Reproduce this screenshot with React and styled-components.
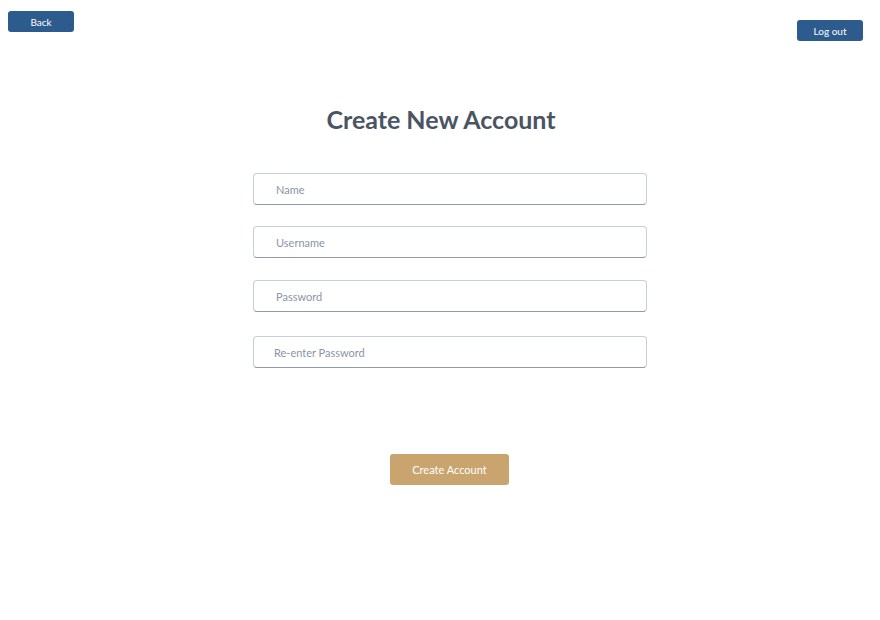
import React from "react";
import styled, { createGlobalStyle } from "styled-components";

const Global = createGlobalStyle`
  html, body { margin: 0; padding: 0; background: #ffffff; }
  body { font-family: Lato, "Liberation Sans", sans-serif; }
  * { box-sizing: border-box; }
`;

const Page = styled.div`
  width: 880px;
  height: 620px;
  position: relative;
  display: flex;
  flex-direction: column;
`;

const TopBar = styled.div`
  display: flex;
  justify-content: space-between;
  align-items: flex-start;
  padding: 11px 17px 0 8px;
  height: 41px;
`;

const NavButton = styled.button`
  width: 66px;
  height: 21px;
  margin-top: ${(p) => p.$offset || 0}px;
  background: #2d5b8d;
  color: #ffffff;
  border: none;
  border-radius: 3px;
  font-family: Lato, "Liberation Sans", sans-serif;
  font-size: 10px;
  padding: 0;
  cursor: pointer;
`;

const Title = styled.h1`
  margin: 62px 0 0 0;
  text-align: center;
  font-size: 25px;
  line-height: 32px;
  font-weight: 700;
  color: #4a5463;
  padding-left: 2px;
`;

const Form = styled.div`
  width: 394px;
  margin-left: 253px;
  display: flex;
  flex-direction: column;
  align-items: stretch;
`;

const Field = styled.input`
  height: 32px;
  margin-top: ${(p) => p.$top}px;
  border: 1px solid #c9cfd8;
  border-bottom-color: #8f9bac;
  border-radius: 4px;
  padding: 0 0 0 ${(p) => p.$pad || 22}px;
  font-family: Lato, "Liberation Sans", sans-serif;
  font-size: 11px;
  color: #4a5463;
  background: #ffffff;
  outline: none;
  &::placeholder { color: #8a94a5; }
`;

const SubmitButton = styled.button`
  align-self: center;
  width: 119px;
  height: 31px;
  margin-top: 86px;
  margin-left: -1px;
  background: #c9a46e;
  color: #ffffff;
  border: none;
  border-radius: 3px;
  font-family: Lato, "Liberation Sans", sans-serif;
  font-size: 11px;
  padding: 0;
  cursor: pointer;
`;

export default function App() {
  return (
    <>
      <Global />
      <Page>
        <TopBar>
          <NavButton>Back</NavButton>
          <NavButton $offset={9}>Log out</NavButton>
        </TopBar>
        <Title>Create New Account</Title>
        <Form>
          <Field $top={38} placeholder="Name" />
          <Field $top={21} placeholder="Username" />
          <Field $top={22} placeholder="Password" type="password" />
          <Field $top={24} $pad={20} placeholder="Re-enter Password" type="password" />
          <SubmitButton>Create Account</SubmitButton>
        </Form>
      </Page>
    </>
  );
}
